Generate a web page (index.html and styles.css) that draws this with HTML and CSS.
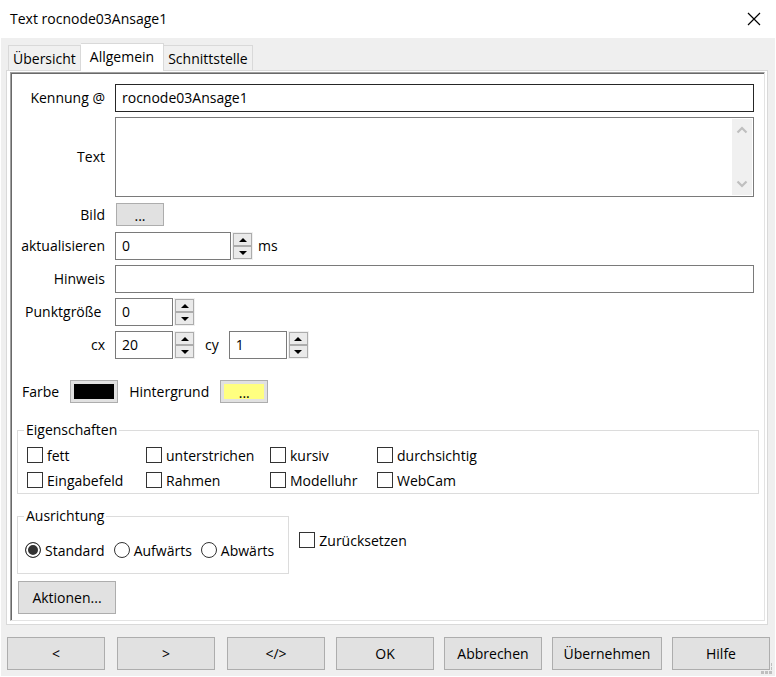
FILE: index.html
```html
<!DOCTYPE html>
<html lang="de">
<head>
  <meta charset="UTF-8">
  <title>Text rocnode03Ansage1</title>
  <link rel="stylesheet" href="styles.css">
</head>
<body>
  <header class="titlebar">
    <h1>Text rocnode03Ansage1</h1>
    <button type="button" class="close" aria-label="Schließen">
      <svg width="14" height="14" viewBox="0 0 14 14"><path d="M1 1 L13 13 M13 1 L1 13" stroke="#000" stroke-width="1.2" fill="none"/></svg>
    </button>
  </header>

  <main class="dialog">
    <div class="tabs" role="tablist">
      <button type="button" class="tab" role="tab">Übersicht</button>
      <button type="button" class="tab active" role="tab" aria-selected="true">Allgemein</button>
      <button type="button" class="tab" role="tab">Schnittstelle</button>
    </div>

    <div class="notebook">
      <form class="panel">
        <div class="fields">
          <label for="kennung">Kennung @</label>
          <input type="text" id="kennung" class="box focused" value="rocnode03Ansage1">

          <label for="text">Text</label>
          <div class="memo">
            <textarea id="text"></textarea>
            <div class="scrollbar">
              <svg width="12" height="8" viewBox="0 0 12 8"><path d="M1.5 6.5 L6 2 L10.5 6.5" stroke="#bfbfbf" stroke-width="2.2" fill="none"/></svg>
              <svg width="12" height="8" viewBox="0 0 12 8"><path d="M1.5 1.5 L6 6 L10.5 1.5" stroke="#bfbfbf" stroke-width="2.2" fill="none"/></svg>
            </div>
          </div>

          <label for="bild">Bild</label>
          <div class="row short">
            <button type="button" id="bild" class="button small">...</button>
          </div>

          <label for="aktualisieren">aktualisieren</label>
          <div class="row">
            <input type="text" id="aktualisieren" class="box wide" value="0">
            <span class="spin">
              <button type="button" aria-label="mehr"><svg width="8" height="4" viewBox="0 0 8 4"><path d="M0 4 L4 0 L8 4 Z"/></svg></button>
              <button type="button" aria-label="weniger"><svg width="8" height="4" viewBox="0 0 8 4"><path d="M0 0 L4 4 L8 0 Z"/></svg></button>
            </span>
            <span class="unit">ms</span>
          </div>

          <label for="hinweis">Hinweis</label>
          <input type="text" id="hinweis" class="box">

          <label for="punkt">Punktgröße&nbsp;</label>
          <div class="row">
            <input type="text" id="punkt" class="box number" value="0">
            <span class="spin">
              <button type="button" aria-label="mehr"><svg width="8" height="4" viewBox="0 0 8 4"><path d="M0 4 L4 0 L8 4 Z"/></svg></button>
              <button type="button" aria-label="weniger"><svg width="8" height="4" viewBox="0 0 8 4"><path d="M0 0 L4 4 L8 0 Z"/></svg></button>
            </span>
          </div>

          <label for="cx">cx</label>
          <div class="row">
            <input type="text" id="cx" class="box number" value="20">
            <span class="spin">
              <button type="button" aria-label="mehr"><svg width="8" height="4" viewBox="0 0 8 4"><path d="M0 4 L4 0 L8 4 Z"/></svg></button>
              <button type="button" aria-label="weniger"><svg width="8" height="4" viewBox="0 0 8 4"><path d="M0 0 L4 4 L8 0 Z"/></svg></button>
            </span>
            <label for="cy" class="cy">cy</label>
            <input type="text" id="cy" class="box number" value="1">
            <span class="spin">
              <button type="button" aria-label="mehr"><svg width="8" height="4" viewBox="0 0 8 4"><path d="M0 4 L4 0 L8 4 Z"/></svg></button>
              <button type="button" aria-label="weniger"><svg width="8" height="4" viewBox="0 0 8 4"><path d="M0 0 L4 4 L8 0 Z"/></svg></button>
            </span>
          </div>
        </div>

        <div class="colors">
          <label for="farbe">Farbe</label>
          <button type="button" id="farbe" class="button small color black"></button>
          <label for="hintergrund">Hintergrund</label>
          <button type="button" id="hintergrund" class="button small color yellow">...</button>
        </div>

        <fieldset class="options">
          <legend>Eigenschaften</legend>
          <div class="checks">
            <label><input type="checkbox">fett</label>
            <label><input type="checkbox">unterstrichen</label>
            <label><input type="checkbox">kursiv</label>
            <label><input type="checkbox">durchsichtig</label>
            <label><input type="checkbox">Eingabefeld</label>
            <label><input type="checkbox">Rahmen</label>
            <label><input type="checkbox">Modelluhr</label>
            <label><input type="checkbox">WebCam</label>
          </div>
        </fieldset>

        <div class="align">
          <fieldset>
            <legend>Ausrichtung</legend>
            <div class="radios">
              <label><input type="radio" name="ausrichtung" checked>Standard</label>
              <label><input type="radio" name="ausrichtung">Aufwärts</label>
              <label><input type="radio" name="ausrichtung">Abwärts</label>
            </div>
          </fieldset>
          <label><input type="checkbox">Zurücksetzen</label>
        </div>

        <button type="button" class="button actions">Aktionen...</button>
      </form>
    </div>
  </main>

  <footer class="buttons">
    <div class="group nav">
      <button type="button" class="button">&lt;</button>
      <button type="button" class="button">&gt;</button>
      <button type="button" class="button">&lt;/&gt;</button>
    </div>
    <div class="group">
      <button type="button" class="button">OK</button>
      <button type="button" class="button">Abbrechen</button>
      <button type="button" class="button apply">Übernehmen</button>
      <button type="button" class="button">Hilfe</button>
    </div>
    <svg class="grip" width="11" height="11" viewBox="0 0 11 11" fill="#bfbfbf"><path d="M0 8h3v3h-3z M4 8h3v3h-3z M8 8h3v3h-3z M10 4h1v3h-1z M10 0h1v3h-1z"/></svg>
  </footer>
</body>
</html>
```
FILE: styles.css
```css
* {
  box-sizing: border-box;
}
body {
  margin: 0;
  min-height: 100vh;
  border: 1px solid #fff;
  border-top: none;
  background: #efefef;
  color: #000;
  font-family: "Open Sans", "Noto Sans", sans-serif;
  font-size: 14px;
  line-height: 20px;
}
button, input, textarea {
  font: inherit;
  color: inherit;
}
svg {
  display: block;
}

/* title bar */
.titlebar {
  display: flex;
  justify-content: space-between;
  align-items: center;
  height: 38px;
  padding: 0 14px 0 9px;
  background: #fff;
}
.titlebar h1 {
  margin: 0;
  font-size: 14px;
  font-weight: normal;
}
.close {
  padding: 0;
  border: none;
  background: none;
}

/* tabs */
.dialog {
  padding: 5px 7px 0 5px;
}
.tabs {
  display: flex;
  align-items: flex-end;
  padding-left: 2px;
}
.tab {
  height: 25px;
  padding: 2px 4px 0;
  border: 1px solid #d9d9d9;
  border-bottom: none;
  background: #f0f0f0;
  white-space: nowrap;
}
.tab + .tab {
  border-left: none;
}
.tab.active {
  position: relative;
  height: 28px;
  margin-bottom: -1px;
  padding: 0 9px 2px;
  background: #fff;
}
.notebook {
  padding: 1px 2px 3px 3px;
  border: 1px solid #d9d9d9;
  background: #fff;
}
.panel {
  padding: 11px 5px 6px 6px;
  border: 1px solid #e3e3e3;
  border-top-color: #a0a0a0;
  border-left-color: #a0a0a0;
  box-shadow: inset 1px 1px 0 #696969;
}

/* form */
.fields {
  display: grid;
  grid-template-columns: 88px 1fr;
  gap: 5px 10px;
  align-items: center;
  padding-right: 5px;
}
.fields > label {
  text-align: right;
}
.box {
  width: 100%;
  height: 28px;
  padding: 0 6px 2px;
  border: 1px solid #7a7a7a;
  background: #fff;
}
.box.focused {
  border-color: #262626;
}
.box.wide {
  width: 116px;
}
.box.number {
  width: 58px;
}
.memo {
  display: flex;
  height: 80px;
  padding: 1px;
  border: 1px solid #7a7a7a;
}
.memo textarea {
  flex: 1;
  padding: 4px;
  border: none;
  resize: none;
}
.scrollbar {
  display: flex;
  flex-direction: column;
  justify-content: space-between;
  align-items: center;
  width: 20px;
  padding: 7px 0;
  background: #f0f0f0;
}
.row {
  display: flex;
  align-items: center;
}
.row.short {
  height: 25px;
  padding-left: 1px;
}
.spin {
  display: flex;
  flex-direction: column;
  width: 21px;
  height: 28px;
  padding: 1px;
  margin-left: 1px;
  background: #f0f0f0;
}
.spin button {
  display: flex;
  flex: 1;
  justify-content: center;
  align-items: center;
  padding: 0;
  border: 1px solid #acacac;
  background: #eaeaea;
}
.unit {
  margin-left: 5px;
}
.cy {
  margin: 0 10px;
}
.button {
  min-width: 98px;
  height: 33px;
  padding: 0 10px;
  border: 1px solid #adadad;
  background: #e1e1e1;
}
.button.small {
  min-width: 0;
  width: 48px;
  height: 23px;
  padding: 2px 0 0;
}
.colors {
  display: flex;
  align-items: center;
  gap: 11px;
  margin-top: 21px;
  padding-left: 5px;
}
.color {
  box-shadow: inset 0 0 0 3px #e1e1e1;
}
.color.black {
  background: #000;
}
.color.yellow {
  background: #ffff80;
}
fieldset {
  min-width: 0;
  margin: 0;
  padding: 3px 9px 0;
  border: 1px solid #dcdcdc;
}
legend {
  margin-left: -3px;
  padding: 0 2px;
}
.options {
  margin-top: 17px;
}
.checks {
  display: grid;
  grid-template-columns: 119px 124px 107px 1fr;
  grid-auto-rows: 25px;
}
.checks label, .align label {
  display: flex;
  align-items: center;
  gap: 4px;
}
input[type="checkbox"], input[type="radio"] {
  appearance: none;
  width: 16px;
  height: 16px;
  margin: 0 0 2px;
  border: 1px solid #333;
  background: #fff;
}
input[type="radio"] {
  border-radius: 50%;
}
input[type="radio"]:checked {
  background: #333;
  box-shadow: inset 0 0 0 2px #fff;
}
input[type="checkbox"]:checked {
  background: #333;
}
.align {
  display: flex;
  align-items: center;
  gap: 10px;
  margin-top: 12px;
}
.align fieldset {
  padding: 12px 14px 10px 7px;
}
.align legend {
  margin-left: -1px;
}
.radios {
  display: flex;
  gap: 9px;
  height: 25px;
}
.align > label {
  padding-top: 2px;
}
.actions {
  display: block;
  margin: 7px 0 0 1px;
}

/* bottom buttons */
.buttons {
  position: relative;
  display: flex;
  gap: 11px;
  padding: 12px 5px 6px 6px;
}
.group {
  display: flex;
  gap: 10px;
}
.group.nav {
  gap: 12px;
}
.apply {
  min-width: 110px;
}
.grip {
  position: absolute;
  right: 3px;
  bottom: 2px;
}
```
